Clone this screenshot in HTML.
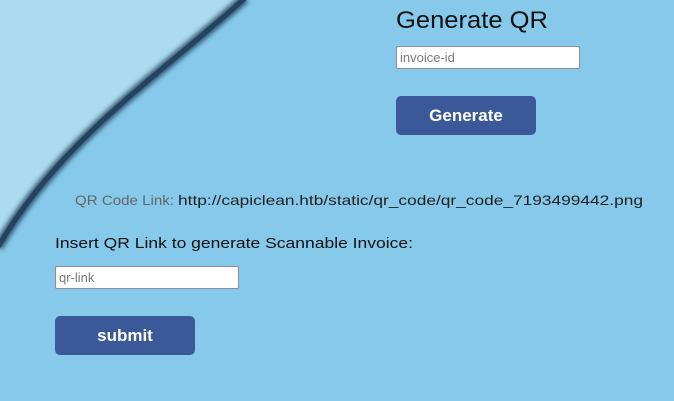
<!DOCTYPE html>
<html><head><style>
html,body{margin:0;padding:0;width:674px;height:401px;overflow:hidden;background:#87c9ea;font-family:"Liberation Sans",sans-serif;}
svg{position:absolute;left:0;top:0}
.in{position:absolute;background:#fff;border:1px solid #8e8e9a;box-sizing:border-box;border-radius:2px;font-size:13px;color:#7a7a7a;padding:3px 0 0 3px;}
.btn{position:absolute;background:#3b5998;border-radius:5px;color:#fff;font-weight:bold;font-size:17px;text-align:center;box-sizing:border-box;}
</style></head><body>
<svg width="674" height="401">
<defs><filter id="b"><feGaussianBlur stdDeviation="2.5"/></filter></defs>
<path d="M0,0 L243,0 C160,75 60,140 0,245 Z" fill="#acdaee"/>
<path d="M245,-2 C160,75 60,140 -2,247" fill="none" stroke="#24425e" stroke-width="10" filter="url(#b)" opacity="0.85"/>
<path d="M245,-2 C160,75 60,140 -2,247" fill="none" stroke="#25435f" stroke-width="5"/>
<text x="396" y="28" font-size="24" textLength="152" lengthAdjust="spacingAndGlyphs" fill="#111">Generate QR</text>
<text x="75" y="205" font-size="14" textLength="99" lengthAdjust="spacingAndGlyphs" fill="#666">QR Code Link:</text>
<text x="178" y="205" font-size="14" textLength="465" lengthAdjust="spacingAndGlyphs" fill="#222">http://capiclean.htb/static/qr_code/qr_code_7193499442.png</text>
<text x="55" y="248" font-size="15" textLength="358" lengthAdjust="spacingAndGlyphs" fill="#111">Insert QR Link to generate Scannable Invoice:</text>
</svg>
<div class="in" style="left:396px;top:46px;width:184px;height:23px">invoice-id</div>
<div class="btn" style="left:396px;top:96px;width:140px;height:39px;line-height:39px">Generate</div>
<div class="in" style="left:55px;top:266px;width:184px;height:23px">qr-link</div>
<div class="btn" style="left:55px;top:316px;width:140px;height:39px;line-height:39px">submit</div>
</body></html>
